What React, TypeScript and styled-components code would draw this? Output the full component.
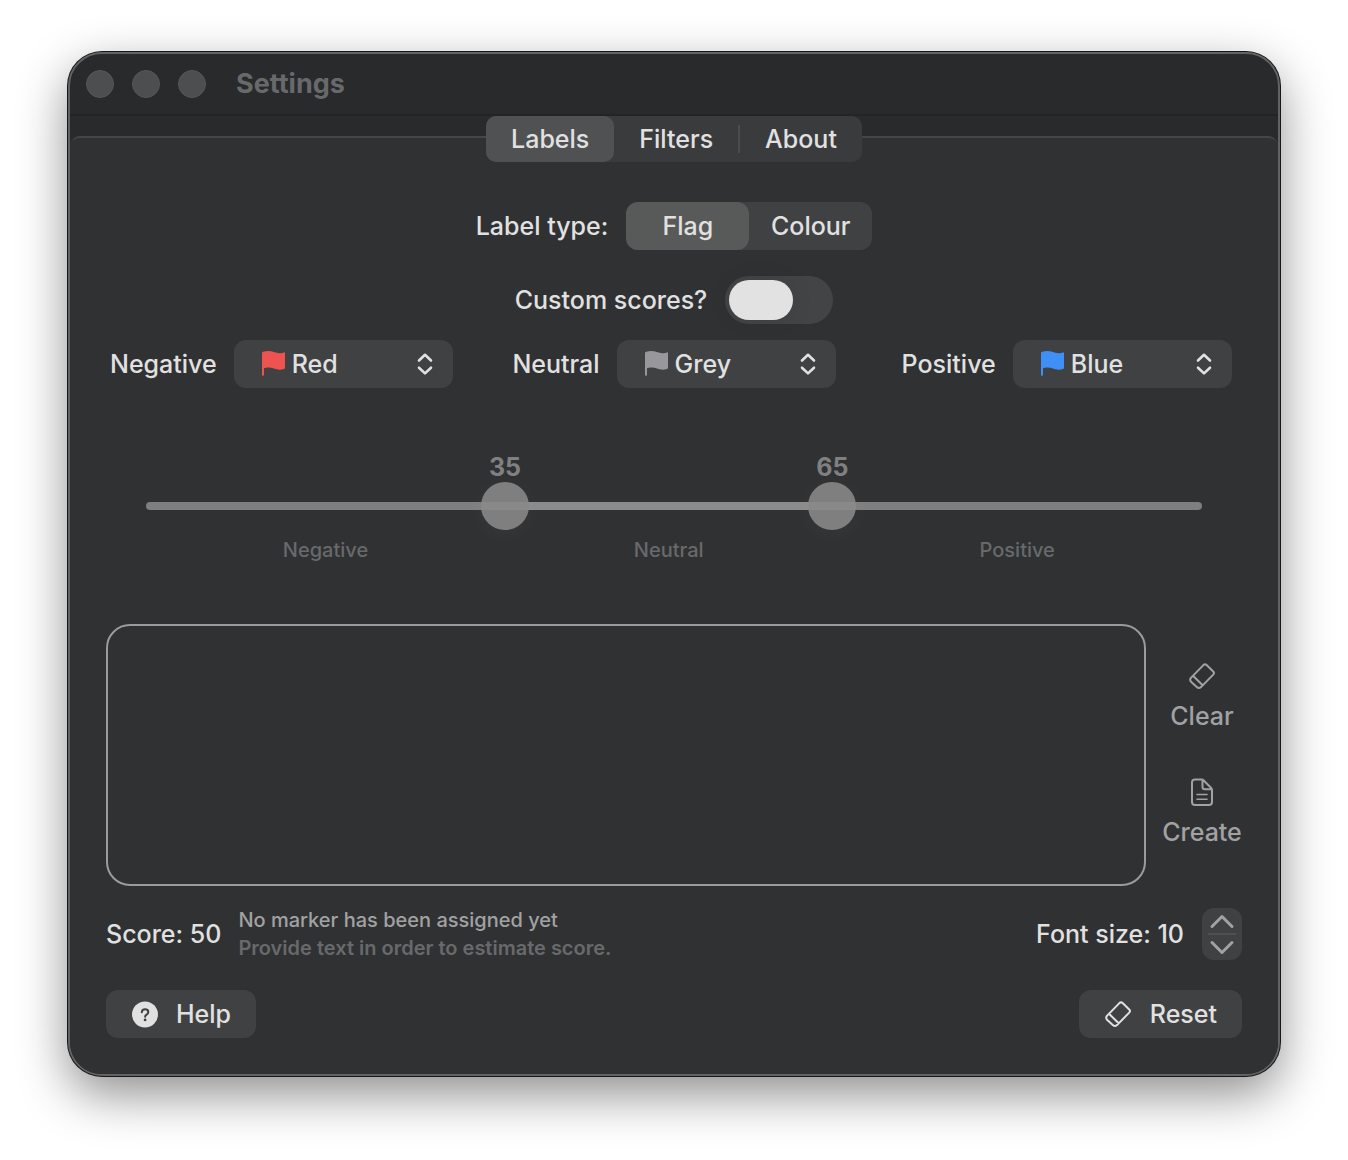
import React, { useState } from "react";
import styled, { createGlobalStyle } from "styled-components";

const color = {
  window: "#303133",
  chrome: "#292a2b",
  control: "#404143",
  text: "#e1e1e1",
  soft: "#a2a2a3",
  dim: "#68696b",
};

const GlobalStyle = createGlobalStyle`
  * { box-sizing: border-box; }
  body {
    margin: 0;
    background: #ffffff;
    color: ${color.text};
    font-family: Inter, "Liberation Sans", sans-serif;
    font-size: 25px;
    font-weight: 500;
    line-height: 32px;
  }
  button, select, textarea, input { font: inherit; color: inherit; margin: 0; }
  button { border: 0; padding: 0; background: none; }
  svg { display: block; flex: none; }
`;

const Desktop = styled.div`
  padding: 52px 68px 84px;
`;

const Window = styled.main`
  min-width: 1100px;
  border: 2px solid #626364;
  border-radius: 34px;
  overflow: hidden;
  background: ${color.chrome};
  box-shadow: 0 0 0 1px #161718, 0 18px 50px rgba(0, 0, 0, 0.45);
`;

const TitleBar = styled.header`
  display: flex;
  align-items: center;
  gap: 30px;
  height: 62px;
  padding: 0 16px;
  border-bottom: 2px solid #232425;
`;

const WindowButtons = styled.div`
  display: flex;
  gap: 18px;
`;

const WindowButton = styled.button`
  width: 28px;
  height: 28px;
  border: 1px solid #565759;
  border-radius: 50%;
  background: #4d4e50;
`;

const Title = styled.h1`
  margin: 0;
  font-size: 27px;
  font-weight: 700;
  color: ${color.dim};
`;

const TabStrip = styled.nav`
  display: flex;
  justify-content: center;
  align-items: flex-start;
  height: 20px;
`;

const TabList = styled.div`
  position: relative;
  z-index: 1;
  display: flex;
  flex: none;
  border-radius: 10px;
  background: #3a3b3d;
`;

const Tab = styled.button<{ $selected: boolean; $divided?: boolean }>`
  display: flex;
  align-items: center;
  height: 46px;
  padding: 0 25px;
  border-radius: 10px;
  background: ${(p) => (p.$selected ? "#505153" : "transparent")};
  &::after {
    content: "";
    display: ${(p) => (p.$divided ? "block" : "none")};
    width: 2px;
    height: 28px;
    margin-left: 25px;
    margin-right: -25px;
    background: #4b4c4e;
  }
`;

const Panel = styled.section`
  padding: 64px 36px 36px;
  border-top: 2px solid #454648;
  border-radius: 10px 10px 0 0;
  background: ${color.window};
`;

const FormRow = styled.div`
  display: flex;
  justify-content: center;
  align-items: center;
  gap: 18px;
  margin-bottom: 26px;
`;

const ToggleRow = styled(FormRow)`
  margin-bottom: 16px;
`;

const Segments = styled.div`
  display: grid;
  grid-template-columns: 1fr 1fr;
  width: 246px;
  border-radius: 12px;
  background: ${color.control};
`;

const Segment = styled.label`
  position: relative;
  display: grid;
  place-items: center;
  height: 48px;
  border-radius: 12px;
  &:has(input:checked) { background: #585a59; }
  input {
    position: absolute;
    inset: 0;
    appearance: none;
  }
`;

const Switch = styled.input`
  appearance: none;
  display: flex;
  width: 108px;
  height: 48px;
  padding: 4px;
  border-radius: 24px;
  background: #434446;
  &::before {
    content: "";
    width: 64px;
    height: 40px;
    border-radius: 20px;
    background: #e2e2e2;
    box-shadow: 0 0 24px rgba(0, 0, 0, 0.08);
  }
  &:checked { justify-content: flex-end; background: #3f8ef7; }
`;

const Markers = styled.div`
  display: grid;
  grid-template-columns: repeat(3, 1fr);
  gap: 42px;
`;

const Marker = styled.div`
  display: flex;
  justify-content: center;
  align-items: center;
  gap: 17px;
`;

const SelectBox = styled.div`
  position: relative;
  width: 219px;
`;

const Select = styled.select`
  appearance: none;
  display: block;
  width: 100%;
  height: 48px;
  padding: 0 48px 0 58px;
  border: 0;
  border-radius: 12px;
  background: ${color.control};
`;

const SelectFlag = styled.span`
  position: absolute;
  left: 27px;
  top: 10px;
  pointer-events: none;
`;

const SelectArrows = styled.span`
  position: absolute;
  right: 18px;
  top: 12px;
  pointer-events: none;
`;

const Scale = styled.div`
  margin: 64px 40px 62px;
`;

const Values = styled.div`
  position: relative;
  height: 30px;
`;

const Value = styled.output`
  position: absolute;
  transform: translateX(-50%);
  line-height: 30px;
  font-weight: 700;
  color: #808080;
`;

const Slider = styled.div`
  position: relative;
  height: 48px;
  margin: 0 -24px;
`;

const Track = styled.div`
  position: absolute;
  inset: 20px 24px;
  border-radius: 4px;
  background: #7f7f7f;
`;

const Fill = styled.div`
  position: absolute;
  top: 0;
  bottom: 0;
  background: #8b8b8b;
`;

const Thumb = styled.input`
  appearance: none;
  position: absolute;
  inset: 0;
  width: 100%;
  height: 48px;
  background: none;
  pointer-events: none;
  &::-webkit-slider-thumb {
    appearance: none;
    width: 48px;
    height: 48px;
    border-radius: 50%;
    background: linear-gradient(#7f7f7f 20px, #898989 20px, #898989 28px, #7f7f7f 28px);
    box-shadow: 0 4px 28px rgba(255, 255, 255, 0.04);
    pointer-events: auto;
  }
`;

const Ranges = styled.div`
  display: grid;
  margin-top: 8px;
  font-size: 20px;
  line-height: 24px;
  text-align: center;
  color: ${color.dim};
`;

const Editor = styled.div`
  display: grid;
  grid-template-columns: 1fr 80px;
  gap: 16px;
`;

const TextBox = styled.textarea`
  display: block;
  width: 100%;
  height: 262px;
  padding: 16px;
  border: 2px solid #9a9b9c;
  border-radius: 24px;
  background: transparent;
  resize: none;
  outline: none;
`;

const Actions = styled.div`
  display: flex;
  flex-direction: column;
  align-items: center;
  justify-content: center;
  gap: 46px;
`;

const Action = styled.button`
  display: flex;
  flex-direction: column;
  align-items: center;
  gap: 10px;
  color: ${color.soft};
`;

const Status = styled.div`
  display: flex;
  align-items: center;
  gap: 17px;
  margin-top: 20px;
`;

const Message = styled.p<{ $dim?: boolean }>`
  margin: 0;
  font-size: 20px;
  line-height: 28px;
  font-weight: ${(p) => (p.$dim ? 600 : 500)};
  color: ${(p) => (p.$dim ? color.dim : color.soft)};
`;

const FontSize = styled.div`
  display: flex;
  align-items: center;
  gap: 18px;
  margin-left: auto;
`;

const Stepper = styled.div`
  display: flex;
  flex-direction: column;
  align-items: center;
  width: 40px;
  border-radius: 12px;
  background: ${color.control};
  color: ${color.soft};
`;

const Step = styled.button`
  display: grid;
  place-items: center;
  width: 40px;
  height: 25px;
`;

const StepLine = styled.span`
  width: 28px;
  height: 2px;
  background: #4f5052;
`;

const Footer = styled.footer`
  display: flex;
  justify-content: space-between;
  margin-top: 28px;
`;

const FooterButton = styled.button`
  display: flex;
  align-items: center;
  gap: 18px;
  height: 48px;
  padding: 0 25px;
  border-radius: 12px;
  background: ${color.control};
`;

const FlagIcon = ({ fill }: { fill: string }) => (
  <svg width="26" height="28" viewBox="0 0 26 28" fill={fill}>
    <path d="M1 3.2C1 2.4 1.500 2 2.200 1.800C4 1.200 5.500 1 7 1C11.500 1 14.500 3.200 18.500 3.200C20.500 3.200 22 2.700 23 2.400C23.700 2.200 24 2.500 24 3.200V17.500C24 18.300 23.700 18.700 23 19C21.700 19.600 20.300 19.800 18.800 19.800C14.200 19.800 11.500 17.600 7.500 17.600C5.500 17.600 4.200 17.900 3 18.300V25C3 26 1 26 1 25Z" />
  </svg>
);

const UpDownIcon = () => (
  <svg width="20" height="24" viewBox="0 0 20 24" fill="none" stroke="currentColor" strokeWidth="2.600" strokeLinecap="round" strokeLinejoin="round">
    <path d="M4 8.500L10 2.800L16 8.500M4 15.700L10 21.400L16 15.700" />
  </svg>
);

const EraserIcon = () => (
  <svg width="28" height="28" viewBox="0 0 28 28" fill="none" stroke="currentColor" strokeWidth="2" strokeLinejoin="round">
    <path d="M2.900 15.900L15.400 3.100Q17 1.600 18.600 3.100L25.200 9.500Q26.800 11 25.200 12.600L13 25.100Q10.900 27 8.800 25.100L3.300 20Q1.300 18 2.900 15.900ZM5 13.800L14.700 23.300" />
  </svg>
);

const DocumentIcon = () => (
  <svg width="28" height="28" viewBox="0 0 28 28" fill="none" stroke="currentColor" strokeWidth="2" strokeLinejoin="round" strokeLinecap="round">
    <path d="M7 1.500H13.800Q14.800 1.500 15.500 2.200L23.200 10Q24 10.700 24 11.800V24Q24 27 21 27H7Q4 27 4 24V4.500Q4 1.500 7 1.500ZM14.500 2V9Q14.500 11.300 16.800 11.300H23.600" />
    <path d="M9 16.500H19M9 21.300H19" strokeWidth="1.600" />
  </svg>
);

const HelpIcon = () => (
  <svg width="27" height="28" viewBox="0 0 27 28" fill="none">
    <circle cx="14" cy="14.500" r="13" fill={color.text} />
    <path d="M10.800 12.200C10.900 10.300 12.200 9.200 14.100 9.200C16 9.200 17.300 10.300 17.300 11.900C17.300 13.200 16.700 13.900 15.600 14.600C14.500 15.300 14.100 15.700 14.100 16.700" stroke={color.control} strokeWidth="2" strokeLinecap="round" />
    <circle cx="14.100" cy="19.900" r="1.400" fill={color.control} />
  </svg>
);

const StepIcon = ({ down }: { down?: boolean }) => (
  <svg width="26" height="16" viewBox="0 0 26 16" fill="none" stroke="currentColor" strokeWidth="3" strokeLinecap="round" strokeLinejoin="round">
    <path d={down ? "M3 2.500L13 12.500L23 2.500" : "M3 13.500L13 3.500L23 13.500"} />
  </svg>
);

const flags: Record<string, string> = { Red: "#ef534f", Grey: "#98979c", Blue: "#408ff7" };

function MarkerPicker({ name, initial }: { name: string; initial: string }) {
  const [flag, setFlag] = useState(initial);
  const id = `marker-${name.toLowerCase()}`;
  return (
    <Marker>
      <label htmlFor={id}>{name}</label>
      <SelectBox>
        <Select id={id} value={flag} onChange={(e) => setFlag(e.target.value)}>
          {Object.keys(flags).map((f) => (
            <option key={f}>{f}</option>
          ))}
        </Select>
        <SelectFlag><FlagIcon fill={flags[flag]} /></SelectFlag>
        <SelectArrows><UpDownIcon /></SelectArrows>
      </SelectBox>
    </Marker>
  );
}

export default function App() {
  const [tab, setTab] = useState("Labels");
  // Highest negative score and highest neutral score.
  const [low, high] = [34, 65];
  const [fontSize, setFontSize] = useState(10);
  const [text, setText] = useState("");

  return (
    <>
      <GlobalStyle />
      <Desktop>
        <Window>
          <TitleBar>
            <WindowButtons>
              <WindowButton aria-label="Close" />
              <WindowButton aria-label="Minimise" />
              <WindowButton aria-label="Zoom" />
            </WindowButtons>
            <Title>Settings</Title>
          </TitleBar>
          <TabStrip>
            <TabList role="tablist">
              {["Labels", "Filters", "About"].map((name) => (
                <Tab
                  key={name}
                  role="tab"
                  aria-selected={tab === name}
                  $selected={tab === name}
                  $divided={name === "Filters"}
                  onClick={() => setTab(name)}
                >
                  {name}
                </Tab>
              ))}
            </TabList>
          </TabStrip>
          <Panel>
            <FormRow role="radiogroup" aria-labelledby="label-type">
              <span id="label-type">Label type:</span>
              <Segments>
                <Segment><input type="radio" name="type" defaultChecked />Flag</Segment>
                <Segment><input type="radio" name="type" />Colour</Segment>
              </Segments>
            </FormRow>
            <ToggleRow>
              <label htmlFor="custom">Custom scores?</label>
              <Switch id="custom" type="checkbox" role="switch" />
            </ToggleRow>
            <Markers>
              <MarkerPicker name="Negative" initial="Red" />
              <MarkerPicker name="Neutral" initial="Grey" />
              <MarkerPicker name="Positive" initial="Blue" />
            </Markers>

            <Scale>
              <Values>
                <Value style={{ left: `${low}%` }}>{low + 1}</Value>
                <Value style={{ left: `${high}%` }}>{high}</Value>
              </Values>
              <Slider>
                <Track>
                  <Fill style={{ left: `${low}%`, right: `${100 - high}%` }} />
                </Track>
                <Thumb type="range" aria-label="Neutral from" value={low} disabled readOnly />
                <Thumb type="range" aria-label="Neutral to" value={high} disabled readOnly />
              </Slider>
              <Ranges style={{ gridTemplateColumns: `${low}fr ${high - low}fr ${100 - high}fr` }}>
                <span>Negative</span>
                <span>Neutral</span>
                <span>Positive</span>
              </Ranges>
            </Scale>

            <Editor>
              <TextBox aria-label="Sample text" value={text} onChange={(e) => setText(e.target.value)} />
              <Actions>
                <Action onClick={() => setText("")}><EraserIcon />Clear</Action>
                <Action><DocumentIcon />Create</Action>
              </Actions>
            </Editor>

            <Status>
              <span>Score: 50</span>
              <div>
                <Message>No marker has been assigned yet</Message>
                <Message $dim>Provide text in order to estimate score.</Message>
              </div>
              <FontSize>
                <span>Font size: {fontSize}</span>
                <Stepper>
                  <Step aria-label="Larger" onClick={() => setFontSize(fontSize + 1)}><StepIcon /></Step>
                  <StepLine />
                  <Step aria-label="Smaller" onClick={() => setFontSize(fontSize - 1)}><StepIcon down /></Step>
                </Stepper>
              </FontSize>
            </Status>

            <Footer>
              <FooterButton><HelpIcon />Help</FooterButton>
              <FooterButton><EraserIcon />Reset</FooterButton>
            </Footer>
          </Panel>
        </Window>
      </Desktop>
    </>
  );
}
